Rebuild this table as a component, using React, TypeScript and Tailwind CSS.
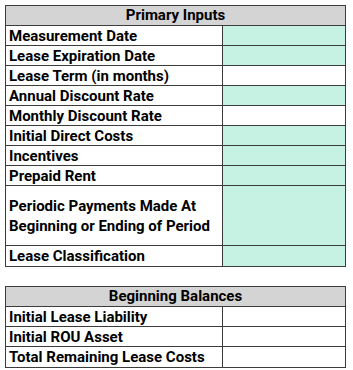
import React from 'react';

type Row = { label: React.ReactNode; input?: boolean; tall?: boolean };

const primary: Row[] = [
    { label: 'Measurement Date', input: true },
    { label: 'Lease Expiration Date', input: true },
    { label: 'Lease Term (in months)' },
    { label: 'Annual Discount Rate', input: true },
    { label: 'Monthly Discount Rate' },
    { label: 'Initial Direct Costs', input: true },
    { label: 'Incentives', input: true },
    { label: 'Prepaid Rent', input: true },
    {
        label: (
            <>
                Periodic Payments Made At
                <br />
                Beginning or Ending of Period
            </>
        ),
        input: true,
        tall: true,
    },
    { label: 'Lease Classification', input: true },
];

const balances: Row[] = [
    { label: 'Initial Lease Liability' },
    { label: 'Initial ROU Asset' },
    { label: 'Total Remaining Lease Costs' },
];

const Section = ({ title, rows }: { title: string; rows: Row[] }) => (
    <div className="w-[341px] border border-[#3c3c3c] text-[15px] font-bold text-black">
        <div className="h-[20px] bg-[#d4d4d4] border-b border-[#3c3c3c] text-center leading-[19px]">{title}</div>
        {rows.map((r, i) => (
            <div
                key={i}
                className={`flex ${r.tall ? 'h-[60px]' : 'h-[20px]'} ${i < rows.length - 1 ? 'border-b border-[#3c3c3c]' : ''}`}
            >
                <div className="w-[217px] shrink-0 border-r border-[#3c3c3c] pl-[3px] flex items-center leading-[20px] whitespace-nowrap">
                    {r.label}
                </div>
                <div className={`flex-1 ${r.input ? 'bg-[#c6f2e4]' : 'bg-white'}`}></div>
            </div>
        ))}
    </div>
);

export default function App() {
    return (
        <div
            className="w-[353px] h-[370px] bg-white pt-[5px] pl-[5px] flex flex-col gap-[19px]"
            style={{ fontFamily: 'Roboto, "Liberation Sans", sans-serif' }}
        >
            <Section title="Primary Inputs" rows={primary} />
            <Section title="Beginning Balances" rows={balances} />
        </div>
    );
}
